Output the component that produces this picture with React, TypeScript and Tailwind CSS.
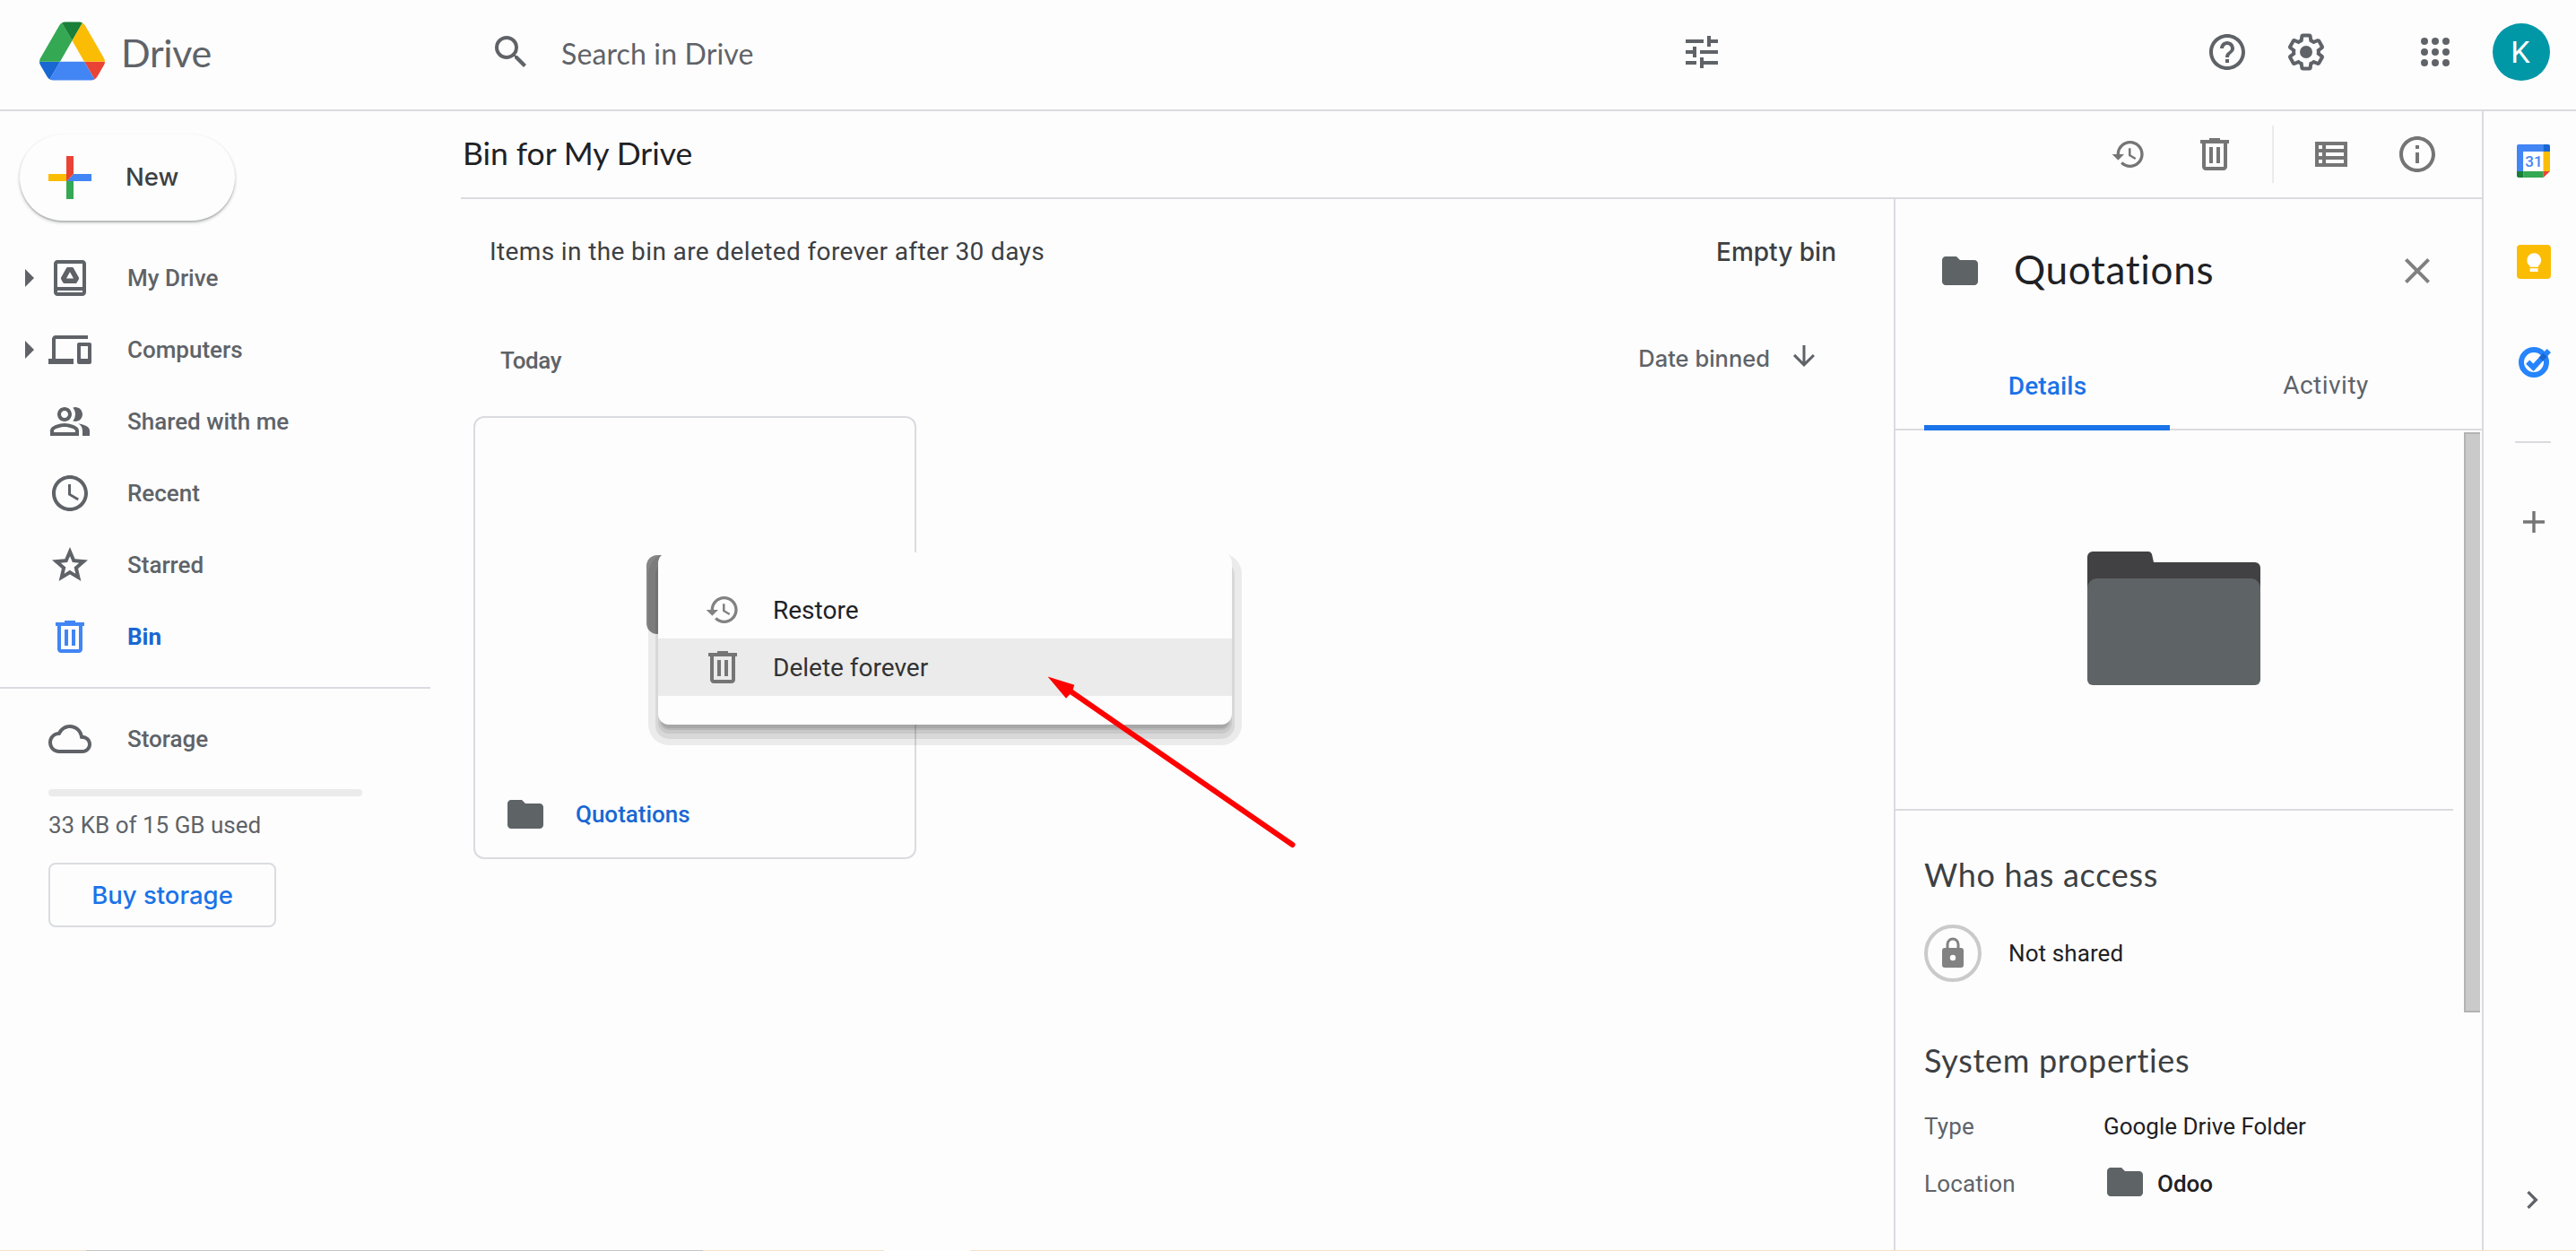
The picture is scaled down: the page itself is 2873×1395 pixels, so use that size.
import type { ReactNode } from "react";
import { clsx } from "clsx";

const paths = {
  search:
    "M15.5 14h-.79l-.28-.27A6.471 6.471 0 0 0 16 9.5 6.5 6.5 0 1 0 9.5 16c1.61 0 3.09-.59 4.23-1.57l.27.28v.79l5 4.99L20.49 19l-4.99-5zm-6 0C7.01 14 5 11.99 5 9.5S7.01 5 9.5 5 14 7.01 14 9.5 11.99 14 9.5 14z",
  tune: "M3 17v2h6v-2H3zM3 5v2h10V5H3zm10 16v-2h8v-2h-8v-2h-2v6h2zM7 9v2H3v2h4v2h2V9H7zm14 4v-2H11v2h10zm-6-4h2V7h4V5h-4V3h-2v6z",
  help: "M11 18h2v-2h-2v2zm1-16C6.48 2 2 6.48 2 12s4.48 10 10 10 10-4.48 10-10S17.52 2 12 2zm0 18c-4.41 0-8-3.59-8-8s3.59-8 8-8 8 3.59 8 8-3.59 8-8 8zm0-14c-2.21 0-4 1.79-4 4h2c0-1.1.9-2 2-2s2 .9 2 2c0 2-3 1.75-3 5h2c0-2.25 3-2.5 3-5 0-2.21-1.79-4-4-4z",
  settings:
    "M13.85 22.25h-3.7c-.74 0-1.36-.54-1.45-1.27l-.27-1.89c-.27-.14-.53-.29-.79-.46l-1.8.72c-.7.26-1.47-.03-1.81-.65L2.2 15.53c-.35-.66-.2-1.44.36-1.88l1.53-1.19c-.01-.15-.02-.3-.02-.46 0-.15.01-.31.02-.46l-1.52-1.19c-.59-.45-.74-1.26-.37-1.88l1.85-3.19c.34-.62 1.11-.9 1.79-.63l1.81.73c.26-.17.52-.32.78-.46l.27-1.91c.09-.7.71-1.25 1.44-1.25h3.7c.74 0 1.36.54 1.45 1.27l.27 1.89c.27.14.53.29.79.46l1.8-.72c.71-.26 1.48.03 1.82.65l1.84 3.18c.36.66.2 1.44-.36 1.88l-1.52 1.19c.01.15.02.3.02.46s-.01.31-.02.46l1.52 1.19c.56.45.72 1.23.37 1.86l-1.86 3.22c-.34.62-1.11.9-1.8.63l-1.8-.72c-.26.17-.52.32-.78.46l-.27 1.91c-.1.68-.72 1.22-1.46 1.22zm-3.23-2h2.76l.37-2.55.53-.22c.44-.18.88-.44 1.34-.78l.45-.34 2.38.96 1.38-2.4-2.03-1.58.07-.56c.03-.26.06-.51.06-.78s-.03-.53-.06-.78l-.07-.56 2.03-1.58-1.39-2.4-2.39.96-.45-.35c-.42-.32-.87-.58-1.33-.77l-.52-.22-.37-2.55h-2.76l-.37 2.55-.53.21c-.44.19-.88.44-1.34.79l-.45.33-2.38-.95-1.39 2.39 2.03 1.58-.07.56a7 7 0 0 0-.06.79c0 .26.02.53.06.78l.07.56-2.03 1.58 1.38 2.4 2.39-.96.45.35c.43.33.86.58 1.33.77l.53.22.38 2.55zM12 8.5a3.5 3.5 0 1 0 0 7 3.5 3.5 0 0 0 0-7z",
  apps: "M6 8a2 2 0 1 0 0-4 2 2 0 0 0 0 4zm6 0a2 2 0 1 0 0-4 2 2 0 0 0 0 4zm6 0a2 2 0 1 0 0-4 2 2 0 0 0 0 4zM6 14a2 2 0 1 0 0-4 2 2 0 0 0 0 4zm6 0a2 2 0 1 0 0-4 2 2 0 0 0 0 4zm6 0a2 2 0 1 0 0-4 2 2 0 0 0 0 4zM6 20a2 2 0 1 0 0-4 2 2 0 0 0 0 4zm6 0a2 2 0 1 0 0-4 2 2 0 0 0 0 4zm6 0a2 2 0 1 0 0-4 2 2 0 0 0 0 4z",
  myDrive:
    "M19 2H5c-1.1 0-2 .9-2 2v16c0 1.1.9 2 2 2h14c1.1 0 2-.9 2-2V4c0-1.1-.9-2-2-2zm0 18H5v-1h14v1zm0-3H5V4h14v13zM10.9 6c-.5 0-.7.2-.9.5L7.1 11.6c-.2.4-.2.7 0 1.1l1 1.8c.2.4.5.5.9.5h6c.4 0 .7-.1.9-.5l1-1.8c.2-.4.2-.7 0-1.1L14 6.5c-.2-.3-.4-.5-.9-.5zM12 8.6l2 3.6h-4z",
  computers:
    "M4 6h18V4H4c-1.1 0-2 .9-2 2v11H0v3h14v-3H4V6zm19 2h-6c-.55 0-1 .45-1 1v10c0 .55.45 1 1 1h6c.55 0 1-.45 1-1V9c0-.55-.45-1-1-1zm-1 9h-4v-7h4v7z",
  shared:
    "M15 8c0-1.42-.5-2.73-1.33-3.76.42-.14.86-.24 1.33-.24 2.21 0 4 1.79 4 4s-1.79 4-4 4c-.43 0-.84-.09-1.23-.21-.03-.01-.06-.02-.1-.03A5.98 5.98 0 0 0 15 8zm1.66 5.13C18.03 14.06 19 15.32 19 17v3h4v-3c0-2.18-3.58-3.47-6.34-3.87zM9 6c-1.1 0-2 .9-2 2s.9 2 2 2 2-.9 2-2-.9-2-2-2m0 9c-2.7 0-5.8 1.29-6 2.01V18h12v-1c-.2-.71-3.3-2-6-2M9 4c2.21 0 4 1.79 4 4s-1.79 4-4 4-4-1.79-4-4 1.79-4 4-4zm0 9c2.67 0 8 1.34 8 4v3H1v-3c0-2.66 5.33-4 8-4z",
  recent:
    "M11.99 2C6.47 2 2 6.48 2 12s4.47 10 9.99 10C17.52 22 22 17.52 22 12S17.52 2 11.99 2zM12 20c-4.42 0-8-3.58-8-8s3.58-8 8-8 8 3.58 8 8-3.58 8-8 8zm.5-13H11v6l5.25 3.15.75-1.23-4.5-2.67z",
  starred:
    "M12 7.13l.97 2.29.47 1.11 1.2.1 2.47.21-1.88 1.63-.91.79.27 1.18.56 2.41-2.12-1.28-1.03-.64-1.03.62-2.12 1.28.56-2.41.27-1.18-.91-.79-1.88-1.63 2.47-.21 1.2-.1.47-1.11.97-2.27M12 2L9.19 8.63 2 9.24l5.46 4.73L5.82 21 12 17.27 18.18 21l-1.64-7.03L22 9.24l-7.19-.61L12 2z",
  bin: "M15 4V3H9v1H4v2h1v13c0 1.1.9 2 2 2h10c1.1 0 2-.9 2-2V6h1V4h-5zm2 15H7V6h10v13zM9 8h2v9H9zm4 0h2v9h-2z",
  cloud:
    "M19.35 10.04C18.67 6.59 15.64 4 12 4 9.11 4 6.6 5.64 5.35 8.04 2.34 8.36 0 10.91 0 14c0 3.31 2.69 6 6 6h13c2.76 0 5-2.24 5-5 0-2.64-2.05-4.78-4.65-4.96zM19 18H6c-2.21 0-4-1.79-4-4 0-2.05 1.53-3.76 3.56-3.97l1.07-.11.5-.95C8.08 7.14 9.94 6 12 6c2.62 0 4.88 1.86 5.39 4.43l.3 1.5 1.53.11c1.56.1 2.78 1.41 2.78 2.96 0 1.65-1.35 3-3 3z",
  restore:
    "M13 3c-4.97 0-9 4.03-9 9H1l3.89 3.89.07.14L9 12H6c0-3.87 3.13-7 7-7s7 3.13 7 7-3.13 7-7 7c-1.93 0-3.68-.79-4.94-2.06l-1.42 1.42A8.954 8.954 0 0 0 13 21c4.97 0 9-4.03 9-9s-4.03-9-9-9zm-1 5v5l4.28 2.54.72-1.21-3.5-2.08V8z",
  list: "M3 5v14h18V5H3zm4 2v2H5V7h2zm-2 6v-2h2v2H5zm0 2h2v2H5v-2zm14 2H9v-2h10v2zm0-4H9v-2h10v2zm0-4H9V7h10v2z",
  info: "M11 7h2v2h-2zm0 4h2v6h-2zm1-9C6.48 2 2 6.48 2 12s4.48 10 10 10 10-4.48 10-10S17.52 2 12 2zm0 18c-4.41 0-8-3.59-8-8s3.59-8 8-8 8 3.59 8 8-3.59 8-8 8z",
  folder: "M10 4H4c-1.1 0-1.99.9-1.99 2L2 18c0 1.1.9 2 2 2h16c1.1 0 2-.9 2-2V8c0-1.1-.9-2-2-2h-8l-2-2z",
  close: "M19 6.41L17.59 5 12 10.59 6.41 5 5 6.41 10.59 12 5 17.59 6.41 19 12 13.41 17.59 19 19 17.59 13.41 12z",
  down: "M20 12l-1.41-1.41L13 16.17V4h-2v12.17l-5.58-5.59L4 12l8 8 8-8z",
  chevron: "M10 6L8.59 7.41 13.17 12l-4.58 4.59L10 18l6-6z",
};

type IconName = keyof typeof paths;

function Icon({ name, className = "size-12" }: { name: IconName; className?: string }) {
  return (
    <svg viewBox="0 0 24 24" fill="currentColor" className={clsx("shrink-0", className)}>
      <path fillRule="evenodd" d={paths[name]} />
    </svg>
  );
}

function DriveLogo() {
  return (
    <svg viewBox="0 0 87.3 78" className="h-[66px] w-[73px] shrink-0">
      <path fill="#1967d2" d="m6.6 66.85 3.85 6.65c.8 1.4 1.95 2.5 3.3 3.3L27.5 53H0c0 1.55.4 3.1 1.2 4.5z" />
      <path fill="#34a853" d="M43.65 25 29.9 1.2c-1.35.8-2.5 1.9-3.3 3.3l-25.4 44A9.06 9.06 0 0 0 0 53h27.5z" />
      <path fill="#ea4335" d="M73.55 76.8c1.35-.8 2.5-1.9 3.3-3.3l9.25-16c.8-1.4 1.2-2.95 1.2-4.5H59.8z" />
      <path fill="#188038" d="M43.65 25 57.4 1.2C56.05.4 54.5 0 52.9 0H34.4c-1.6 0-3.15.45-4.5 1.2z" />
      <path fill="#4285f4" d="M59.8 53H27.5L13.75 76.8c1.35.8 2.9 1.2 4.5 1.2h50.8c1.6 0 3.15-.45 4.5-1.2z" />
      <path fill="#fbbc04" d="m73.4 26.5-12.7-22c-.8-1.4-1.95-2.5-3.3-3.3L43.65 25 59.8 53h27.45c0-1.55-.4-3.1-1.2-4.5z" />
    </svg>
  );
}

function Header() {
  return (
    <header className="flex h-[124px] items-center border-b-2 border-[#dadbe0] pr-[29px] pb-[6px] text-[#5f6368]">
      <div className="flex w-[546px] items-center gap-[18px] pl-[44px]">
        <div className="pb-[2px]">
          <DriveLogo />
        </div>
        <span className="font-[Lato] text-[43px] leading-none tracking-[-0.3px]">Drive</span>
      </div>
      <div className="flex w-[1376px] items-center">
        <Icon name="search" />
        <span className="ml-8 pt-[3px] font-[Lato] text-[32px] tracking-[0.14px]">Search in Drive</span>
        <Icon name="tune" className="ml-auto size-12" />
      </div>
      <div className="ml-auto flex items-center gap-10">
        <Icon name="help" />
        <Icon name="settings" className="mr-14 size-12" />
        <Icon name="apps" />
        <div className="flex size-16 items-center justify-center rounded-full bg-[#0097a7] pr-[2px] font-[Roboto] text-[34px] text-white">
          K
        </div>
      </div>
    </header>
  );
}

function NavItem({ icon, label, expandable, active }: { icon: IconName; label: string; expandable?: boolean; active?: boolean }) {
  return (
    <li className="flex h-20 items-center pl-7">
      <span className="mr-4 w-[10px]">
        {expandable && (
          <svg viewBox="0 0 10 20" className="h-5 w-[10px] fill-[#5f6368]">
            <path d="M0 0l10 10L0 20z" />
          </svg>
        )}
      </span>
      <Icon name={icon} className={clsx("size-12", active && "text-[#4285f4]")} />
      <span className={clsx("ml-10", active ? "font-bold text-[#1967d2]" : "font-medium")}>{label}</span>
    </li>
  );
}

function Sidebar() {
  return (
    <aside className="w-[514px] shrink-0 pt-[26px] font-[Roboto] text-[26px] text-[#5f6368]">
      <button className="ml-[22px] flex h-24 w-[240px] items-center rounded-full bg-[#fdfdfd] pl-8 shadow-[0_2px_1px_rgba(60,64,67,0.28),0_2px_2px_2px_rgba(60,64,67,0.10)]">
        <svg viewBox="6 6 24 24" className="size-12">
          <path fill="#34a853" d="M16 16v14h4V20z" />
          <path fill="#4285f4" d="M30 16H20l-4 4h14z" />
          <path fill="#fbbc04" d="M6 16v4h10l4-4z" />
          <path fill="#ea4335" d="M20 16V6h-4v14z" />
        </svg>
        <span className="ml-[38px] font-[Inter] text-[27.5px] font-medium text-[#3c4043]">New</span>
      </button>
      <ul className="mt-6">
        <NavItem icon="myDrive" label="My Drive" expandable />
        <NavItem icon="computers" label="Computers" expandable />
        <NavItem icon="shared" label="Shared with me" />
        <NavItem icon="recent" label="Recent" />
        <NavItem icon="starred" label="Starred" />
        <NavItem icon="bin" label="Bin" active />
      </ul>
      <div className="mt-4 h-[2px] w-[480px] bg-[#dadbe0]" />
      <ul className="mt-4">
        <NavItem icon="cloud" label="Storage" />
      </ul>
      <div className="ml-[54px]">
        <div className="mt-4 h-2 w-[350px] rounded-full bg-[#ebebeb]" />
        <p className="mt-4 leading-8">33 KB of 15 GB used</p>
        <button className="mt-[26px] flex h-[72px] w-[254px] items-center justify-center rounded-lg border-2 border-[#dadce0] pt-[2px] font-[Inter] text-[27.5px] font-medium text-[#1a73e8]">
          Buy storage
        </button>
      </div>
    </aside>
  );
}

function Toolbar() {
  return (
    <div className="flex h-[98px] shrink-0 items-center border-b-2 border-[#dadbe0] pr-12 text-[#757575]">
      <h1 className="pb-[2px] pl-[2px] font-[Lato] text-[35.5px] tracking-[-0.05px] text-[#202124]">Bin for My Drive</h1>
      <Icon name="restore" className="ml-auto size-10" />
      <Icon name="bin" className="ml-[52px] size-12" />
      <div className="mx-10 h-16 w-[2px] bg-[#ebebeb]" />
      <Icon name="list" />
      <Icon name="info" className="ml-12 size-12" />
    </div>
  );
}

function FileCard() {
  return (
    <div className="ml-[14px] flex size-[494px] flex-col rounded-xl border-2 border-[#dadbe0]">
      <div className="flex flex-1 items-center justify-center">
        <div className="h-[88px] w-[108px] rounded-xl bg-[#868686]" />
      </div>
      <div className="flex h-24 items-center pl-8">
        <Icon name="folder" className="size-12 text-[#5e6366]" />
        <span className="ml-8 font-medium text-[#1967d2]">Quotations</span>
      </div>
    </div>
  );
}

function FileList() {
  return (
    <main className="flex-1 font-[Roboto] text-[26px]">
      <div className="flex h-[116px] items-center justify-between pt-[2px] pr-[64px] pl-8 text-[28px] text-[#3c4043]">
        <span className="tracking-[0.38px]">Items in the bin are deleted forever after 30 days</span>
        <span className="font-[Inter] text-[28px] font-medium">Empty bin</span>
      </div>
      <div className="flex h-[126px] items-center justify-between pt-[2px] pr-[82px] pl-[44px] text-[#5f6368]">
        <span className="font-medium tracking-[-0.4px]">Today</span>
        <div className="flex items-center pb-1">
          <span className="font-[Inter] text-[25.5px] font-medium">Date binned</span>
          <Icon name="down" className="mb-[6px] ml-[20px] size-9" />
        </div>
      </div>
      <FileCard />
    </main>
  );
}

function Property({ label, children }: { label: string; children: ReactNode }) {
  return (
    <div className="flex h-16 items-center">
      <span className="w-[200px] tracking-[0.15px] text-[#5f6368]">{label}</span>
      {children}
    </div>
  );
}

function DetailsPanel() {
  return (
    <section className="flex w-[656px] shrink-0 flex-col border-l-2 border-[#dadbe0] font-[Roboto] text-[26px] text-[#202124]">
      <div className="flex h-40 items-center pr-12 pl-12">
        <Icon name="folder" className="size-12 text-[#5e6366]" />
        <h2 className="ml-9 pb-1 font-[Lato] text-[44px] tracking-[0.7px]">Quotations</h2>
        <Icon name="close" className="ml-auto size-12 text-[#808080]" />
      </div>
      <div className="flex h-[98px] border-b-2 border-[#dadbe0] pl-8 text-[28px]">
        <div className="relative flex w-[274px] items-center justify-center pt-[2px] pl-px font-medium tracking-[0.15px] text-[#1a73e8]">
          Details
          <div className="absolute inset-x-0 -bottom-[2px] h-[6px] bg-[#1a73e8]" />
        </div>
        <div className="flex flex-1 items-center justify-center tracking-[0.5px] text-[#5f6368]">Activity</div>
      </div>
      <div className="flex flex-1 overflow-hidden">
        <div className="w-[622px]">
          <div className="flex h-[424px] items-center justify-center border-b-2 border-[#dadbe0]">
            <svg viewBox="0 0 193 149" className="mr-px mb-[3px] h-[149px] w-[193px]">
              <path fill="#414144" d="M6 0h62c2 0 3 1 4 3l2 9h113a6 6 0 0 1 6 6v60H0V6a6 6 0 0 1 6-6z" />
              <rect y="30" width="193" height="60" rx="11" fill="#5e6366" />
              <rect y="60" width="193" height="89" rx="6" fill="#5e6366" />
            </svg>
          </div>
          <div className="pl-8">
            <h3 className="mt-[47px] font-[Lato] text-[36px] leading-[48px] tracking-[0.68px] text-[#3c4043]">Who has access</h3>
            <div className="mt-8 flex items-center gap-[30px]">
              <div className="flex size-16 items-center justify-center rounded-full border-4 border-[#cacaca]">
                <svg viewBox="0 0 24 34" className="mb-[2px] h-[34px] w-6">
                  <path d="M6 14V8a6 6 0 0 1 12 0v6" fill="none" stroke="#828282" strokeWidth="3" />
                  <rect y="12" width="24" height="22" rx="3" fill="#828282" />
                  <circle cx="12" cy="23" r="3.2" fill="#fdfdfd" />
                </svg>
              </div>
              <span className="tracking-[0.1px]">Not shared</span>
            </div>
            <h3 className="mt-[63px] font-[Lato] text-[36px] leading-[48px] tracking-[0.7px] text-[#3c4043]">System properties</h3>
            <div className="mt-[18px]">
              <Property label="Type">Google Drive Folder</Property>
              <Property label="Location">
                <Icon name="folder" className="mr-3 mb-1 size-12 text-[#5e6366]" />
                <span className="font-medium">Odoo</span>
              </Property>
            </div>
          </div>
        </div>
        <div className="mt-[2px] ml-3 h-[647px] w-[18px] border-y-2 border-l-2 border-[#b3b3b3] bg-[#cacaca]" />
      </div>
    </section>
  );
}

function CalendarIcon() {
  return (
    <svg viewBox="0 0 37 37" className="size-[37px]">
      <path fill="#4285f4" d="M2 0h27.5v8H7.3v22H0V2a2 2 0 0 1 2-2z" />
      <path fill="#1967d2" d="M29.3 0H35a2 2 0 0 1 2 2v6h-7.7z" />
      <path fill="#fbbc04" d="M29.3 8H37v22h-7.7z" />
      <path fill="#34a853" d="M7.3 30h22v7h-22z" />
      <path fill="#188038" d="M0 30h7.3v7H2a2 2 0 0 1-2-2z" />
      <path fill="#ea4335" d="M29.3 30H37l-7.7 7.3z" />
      <path fill="#fff" d="M7.3 8h22v22h-22z" />
      <text x="19" y="25.4" textAnchor="middle" fill="#4285f4" className="font-[Roboto] text-[17px] font-medium">
        31
      </text>
    </svg>
  );
}

function SideRail() {
  return (
    <aside className="flex w-[105px] shrink-0 flex-col items-center border-l-2 border-[#dadbe0] pt-[37px] pl-[7px]">
      <CalendarIcon />
      <svg viewBox="0 0 38 38" className="mt-[75px] ml-px size-[38px]">
        <rect width="38" height="38" rx="4" fill="#fbbc04" />
        <path fill="#fff" d="M19 9.2a8 8 0 0 1 5 14.3v1.2H14.5v-1.2A8 8 0 0 1 19 9.2zM14.6 26.2h9v3.8h-9z" />
      </svg>
      <svg viewBox="0 0 40 40" fill="none" className="mt-[73px] size-10">
        <circle cx="21" cy="20" r="14" stroke="#2684fc" strokeWidth="6" />
        <path d="M14.2 19.6l6.3 6.2L37.8 7" stroke="#2684fc" strokeWidth="6" />
        <path d="M28.8 16.7l4.7-5.1" stroke="#1967d2" strokeWidth="6" />
      </svg>
      <div className="mt-[68px] h-[2px] w-10 bg-[#dadbe0]" />
      <svg viewBox="0 0 24 24" className="mt-[76px] ml-[2px] size-6 fill-[#757575]">
        <path d="M10.3 0h3.4v10.3H24v3.4H13.7V24h-3.4V13.7H0v-3.4h10.3z" />
      </svg>
      <Icon name="chevron" className="mt-auto mr-[2px] mb-9 size-10 text-[#5f6368]" />
    </aside>
  );
}

function ContextMenu() {
  return (
    <div className="absolute top-[616px] left-[734px] w-[640px] rounded-xl bg-[#fdfdfd] py-8 font-[Roboto] text-[28px] text-[#202124] shadow-[0_8px_0_-4px_rgba(0,0,0,0.08),0_8px_0_-2px_rgba(0,0,0,0.09),0_10px_0_0_rgba(0,0,0,0.07),0_13px_0_3px_rgba(0,0,0,0.08),0_12px_0_11px_rgba(0,0,0,0.07)]">
      <div className="flex h-16 items-center pl-[52px]">
        <Icon name="restore" className="size-10 text-[#828282]" />
        <span className="ml-9 pt-[2px]">Restore</span>
      </div>
      <div className="flex h-16 items-center bg-[#ebebeb] pl-12">
        <Icon name="bin" className="size-12 text-[#757575]" />
        <span className="ml-8 pt-[2px] text-[#333]">Delete forever</span>
      </div>
    </div>
  );
}

// Red pointer laid over the "Delete forever" entry
function Pointer() {
  return (
    <svg viewBox="0 0 280 194" className="absolute top-[752px] left-[1166px] h-[194px] w-[280px]">
      <path d="M26 17.5L275.5 190" stroke="#fe0000" strokeWidth="6" strokeLinecap="round" />
      <path d="M2.5 2.5L32.3 11.8L29.8 19.5L23 26.8Z" fill="#fe0000" />
    </svg>
  );
}

export default function App() {
  return (
    <div className="relative flex h-[1395px] w-[2873px] flex-col overflow-hidden bg-[#fdfdfd]">
      <Header />
      <div className="flex h-[1270px]">
        <Sidebar />
        <div className="flex flex-1 flex-col">
          <Toolbar />
          <div className="flex flex-1">
            <FileList />
            <DetailsPanel />
          </div>
        </div>
        <SideRail />
      </div>
      <div className="flex h-px bg-[#f6e0c8]">
        <div className="ml-24 w-[688px] bg-[#c4c4c4]" />
        <div className="ml-[202px] w-24 bg-white" />
      </div>
      <ContextMenu />
      <Pointer />
    </div>
  );
}
